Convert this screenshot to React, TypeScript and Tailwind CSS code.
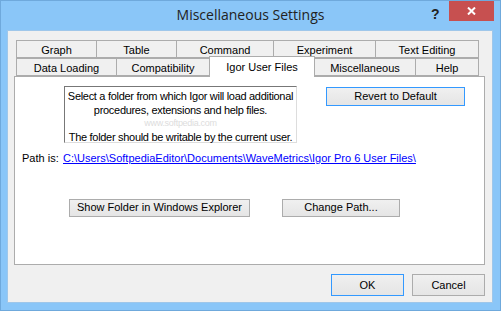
import React from "react";

const row1 = [
  { label: "Graph", w: 81 },
  { label: "Table", w: 81 },
  { label: "Command", w: 98 },
  { label: "Experiment", w: 103 },
  { label: "Text Editing", w: 104 },
];

const row2 = [
  { label: "Data Loading", w: 101 },
  { label: "Compatibility", w: 94 },
  { label: "Igor User Files", w: 106, active: true },
  { label: "Miscellaneous", w: 102 },
  { label: "Help", w: 64 },
];

const base = "font-['Liberation_Sans',Arial,sans-serif] text-[11px] whitespace-nowrap";
const ui = `${base} text-black`;

function Btn({ label, w, h, focus }: { label: string; w: number; h: number; focus?: boolean }) {
  return (
    <div
      style={{ width: w, height: h }}
      className={`flex items-center justify-center border bg-gradient-to-b from-[#f0f0f0] to-[#e5e5e5] ${ui} ${
        focus ? "border-[#3399ff]" : "border-[#acacac]"
      }`}
    >
      {label}
    </div>
  );
}

function TabRow({ tabs }: { tabs: { label: string; w: number; active?: boolean }[] }) {
  return (
    <div className="flex h-[18px] items-end">
      {tabs.map((t, i) => (
        <div
          key={i}
          style={{ width: t.w }}
          className={
            t.active
              ? `relative z-10 -mb-px -ml-px h-[21px] border border-b-0 border-[#acacac] bg-white pt-[2px] text-center ${ui}`
              : `-ml-px h-[18px] border border-[#acacac] bg-[#f0f0f0] pt-[1px] text-center first:ml-0 ${ui}`
          }
        >
          {t.label}
        </div>
      ))}
    </div>
  );
}

export default function App() {
  return (
    <div className="h-[311px] w-[501px] overflow-hidden border border-[#6fa9dc] bg-[#8ac6f8]">
      {/* Title bar */}
      <div className="relative flex h-[29px] items-center justify-center">
        <span className="font-['Open_Sans',sans-serif] text-[14px] text-[#222] pb-[2px]">Miscellaneous Settings</span>
        <span className="absolute left-[430px] top-[3px] font-['Liberation_Sans',sans-serif] text-[14px] font-bold text-[#222]">?</span>
        <div className="absolute left-[448px] top-[-1px] flex h-[21px] w-[45px] items-center justify-center bg-[#c75050]">
          <svg width="9" height="8" viewBox="0 0 9 8">
            <path d="M1 0.5 L8 7.5 M8 0.5 L1 7.5" stroke="white" strokeWidth="2" />
          </svg>
        </div>
      </div>

      {/* Client area */}
      <div className="ml-[6px] h-[273px] w-[486px] border border-[#9fc7ea] bg-[#f0f0f0] pl-[6px] pt-[9px]">
        <div className="w-[471px]">
          <div className="pl-[2px]">
            <TabRow tabs={row1} />
            <TabRow tabs={row2} />
          </div>
          <div className="h-[189px] border border-[#acacac] bg-white">
            <div className="flex pt-[9px]">
              <div className="ml-[49px] flex h-[57px] w-[233px] flex-col items-center border border-t-[#777] border-l-[#777] border-r-[#ddd] border-b-[#ddd] pt-[2px] leading-[14px] tracking-[-0.3px]">
                <span className={ui}>Select a folder from which Igor will load additional</span>
                <span className={ui}>procedures, extensions and help files.</span>
                <span className="h-[10px] font-['Liberation_Sans',sans-serif] text-[9px] leading-[12px] text-[#ddd]">www.softpedia.com</span>
                <span className={`${ui} mt-[3px]`}>The folder should be writable by the current user.</span>
              </div>
              <div className="ml-[29px] mt-px">
                <Btn label="Revert to Default" w={139} h={19} focus />
              </div>
            </div>
            <div className="mt-[7px] flex items-center">
              <span className={`ml-[7px] w-[41px] ${ui}`}>Path is:</span>
              <span className={`${base} text-[#0000ff] underline`}>
                C:\Users\SoftpediaEditor\Documents\WaveMetrics\Igor Pro 6 User Files\
              </span>
            </div>
            <div className="mt-[32px] flex">
              <div className="ml-[54px]">
                <Btn label="Show Folder in Windows Explorer" w={181} h={18} />
              </div>
              <div className="ml-[32px]">
                <Btn label="Change Path..." w={118} h={18} />
              </div>
            </div>
          </div>
          <div className="mt-[9px] flex justify-end gap-[8px]">
            <Btn label="OK" w={73} h={22} focus />
            <Btn label="Cancel" w={73} h={22} />
          </div>
        </div>
      </div>
    </div>
  );
}
